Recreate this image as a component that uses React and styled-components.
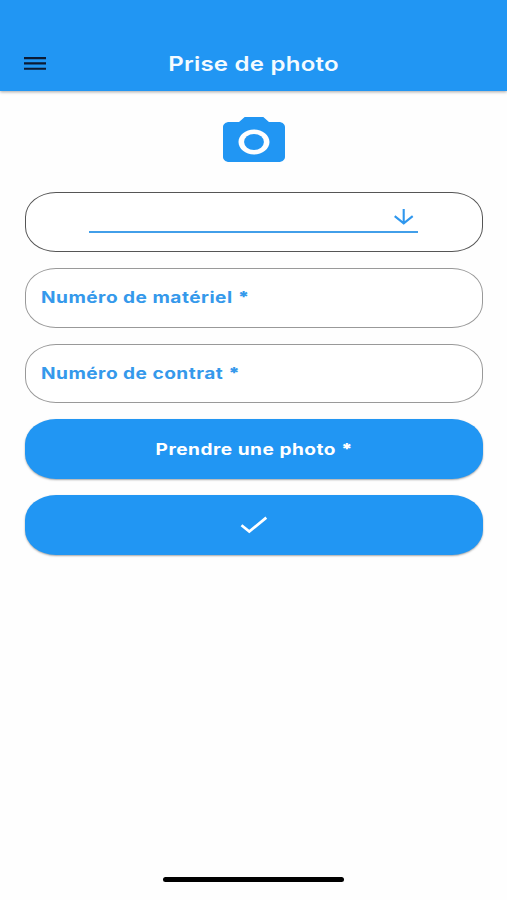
import styled, { createGlobalStyle } from "styled-components";

const blue = "#2196f3";

const GlobalStyle = createGlobalStyle`
    body {
        margin: 0;
        background-color: #fefefe;
        font-family: Inter, "Liberation Sans", sans-serif;
    }
`;

const StyledScreen = styled.div`
    display: flex;
    flex-direction: column;
    height: 900px;
    overflow: hidden;
`;

const StyledHeader = styled.header`
    box-sizing: border-box;
    display: grid;
    grid-template-columns: 46px 1fr 46px;
    align-items: center;
    height: 91px;
    padding: 36px 0 0;
    background-color: ${blue};
    box-shadow: 0 1px 3px rgba(0, 0, 0, 0.35);
`;

const StyledMenuButton = styled.button`
    display: flex;
    justify-content: flex-end;
    padding: 0;
    border: 0;
    background: none;
`;

const StyledTitle = styled.h1`
    margin: 0;
    color: #f4fbff;
    font-size: 20px;
    font-weight: 600;
    line-height: 24px;
    letter-spacing: 0.2px;
    text-align: center;
    transform: scaleX(1.2);
`;

const StyledMain = styled.main`
    flex: 1;
    display: flex;
    flex-direction: column;
    align-items: center;
    padding: 26px 24px 0 25px;
`;

const StyledForm = styled.form`
    display: flex;
    flex-direction: column;
    gap: 16px;
    width: 100%;
    margin-top: 30px;
`;

const StyledField = styled.div`
    box-sizing: border-box;
    display: flex;
    align-items: center;
    height: ${(props) => (props.$select ? "60px" : "59.5px")};
    padding: 0 15px 0 14.5px;
    border: 1.3px solid ${(props) => (props.$select ? "#555" : "#999")};
    border-radius: 31px / 25px;
    justify-content: ${(props) => (props.$select ? "center" : "flex-start")};
    background-color: #fff;
`;

const StyledSelect = styled.div`
    box-sizing: border-box;
    display: flex;
    justify-content: flex-end;
    width: 329px;
    height: 25px;
    margin-top: -3px;
    padding-right: 4px;
    border-bottom: 2px solid #429fe9;
`;

const StyledLabel = styled.span`
    color: #3599eb;
    font-size: 15.5px;
    font-weight: 700;
    letter-spacing: 0.4px;
    white-space: nowrap;
    transform: scaleX(1.23);
    transform-origin: left;
`;

const StyledButton = styled.button`
    display: flex;
    align-items: center;
    justify-content: center;
    height: 60px;
    padding: 0;
    border: 0;
    border-radius: 31px / 25px;
    background-color: ${blue};
    box-shadow: 0 1px 2px rgba(0, 0, 0, 0.35);
    font-family: inherit;
`;

const StyledButtonText = styled.span`
    color: #fff;
    font-size: 15.5px;
    font-weight: 700;
    letter-spacing: 0.42px;
    transform: scaleX(1.23);
`;

const StyledStar = styled.span`
    font-weight: 900;
`;

const StyledHomeBar = styled.div`
    align-self: center;
    width: 181px;
    height: 5px;
    margin-bottom: 18px;
    border-radius: 3px;
    background-color: #000;
`;

function MenuIcon() {
    return (
        <svg width="22" height="13" viewBox="0 0 22 13">
            <path d="M0 1.1H22M0 6.4H22M0 11.7H22" stroke="#0b1a33" strokeWidth="2.1" />
        </svg>
    );
}

function CameraIcon() {
    return (
        <svg width="62" height="45" viewBox="2 2 20 18" preserveAspectRatio="none" fill={blue}>
            <circle cx="12" cy="12" r="3.2" />
            <path d="M9 2L7.17 4H4c-1.1 0-2 .9-2 2v12c0 1.1.9 2 2 2h16c1.1 0 2-.9 2-2V6c0-1.1-.9-2-2-2h-3.17L15 2H9zm3 15c-2.76 0-5-2.24-5-5s2.24-5 5-5 5 2.24 5 5-2.24 5-5 5z" />
        </svg>
    );
}

function ArrowIcon() {
    return (
        <svg width="20" height="17" viewBox="0 0 20 17" fill="none" stroke="#2f97ee" strokeWidth="2.1">
            <path d="M9.7 1V15.3M0.7 8.1L9.7 15.3L18.7 8.1" />
        </svg>
    );
}

function CheckIcon() {
    return (
        <svg width="28" height="18" viewBox="0 0 28 18" fill="none" stroke="#fff" strokeWidth="2.7">
            <path d="M1.5 9.3L9.3 15.6L26.3 1.6" />
        </svg>
    );
}

function App() {
    return (
        <StyledScreen>
            <GlobalStyle />
            <StyledHeader>
                <StyledMenuButton type="button" aria-label="Menu">
                    <MenuIcon />
                </StyledMenuButton>
                <StyledTitle>Prise de photo</StyledTitle>
            </StyledHeader>
            <StyledMain>
                <CameraIcon />
                <StyledForm>
                    <StyledField $select>
                        <StyledSelect>
                            <ArrowIcon />
                        </StyledSelect>
                    </StyledField>
                    <StyledField>
                        <StyledLabel>
                            Numéro de matériel <StyledStar>*</StyledStar>
                        </StyledLabel>
                    </StyledField>
                    <StyledField>
                        <StyledLabel>
                            Numéro de contrat <StyledStar>*</StyledStar>
                        </StyledLabel>
                    </StyledField>
                    <StyledButton type="button">
                        <StyledButtonText>
                            Prendre une photo <StyledStar>*</StyledStar>
                        </StyledButtonText>
                    </StyledButton>
                    <StyledButton type="button" aria-label="Valider">
                        <CheckIcon />
                    </StyledButton>
                </StyledForm>
            </StyledMain>
            <StyledHomeBar />
        </StyledScreen>
    );
}

export default App;
